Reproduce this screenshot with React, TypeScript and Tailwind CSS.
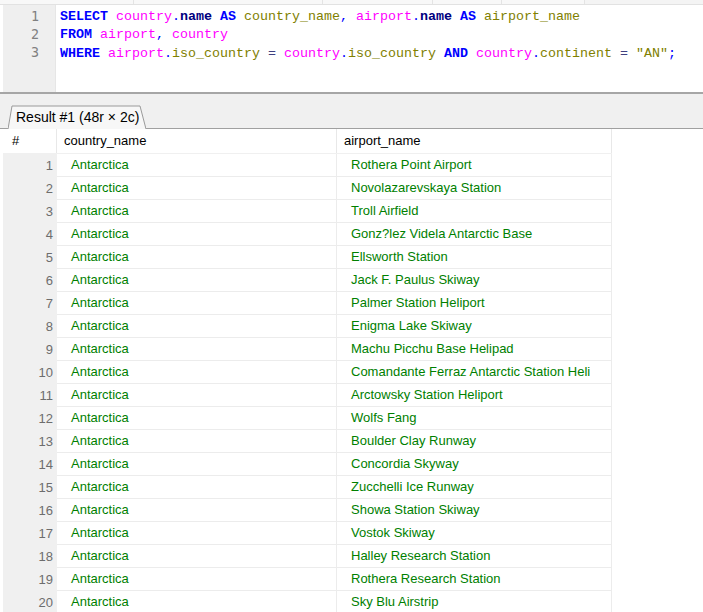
import React from "react";

const rows: string[] = [
  "Rothera Point Airport",
  "Novolazarevskaya Station",
  "Troll Airfield",
  "Gonz?lez Videla Antarctic Base",
  "Ellsworth Station",
  "Jack F. Paulus Skiway",
  "Palmer Station Heliport",
  "Enigma Lake Skiway",
  "Machu Picchu Base Helipad",
  "Comandante Ferraz Antarctic Station Heli",
  "Arctowsky Station Heliport",
  "Wolfs Fang",
  "Boulder Clay Runway",
  "Concordia Skyway",
  "Zucchelli Ice Runway",
  "Showa Station Skiway",
  "Vostok Skiway",
  "Halley Research Station",
  "Rothera Research Station",
  "Sky Blu Airstrip",
];

const K = ({ children }: { children: React.ReactNode }) => (
  <span className="font-bold text-[#0000ff]">{children}</span>
);
const T = ({ children }: { children: React.ReactNode }) => (
  <span className="text-[#ff00ff]">{children}</span>
);
const C = ({ children }: { children: React.ReactNode }) => (
  <span className="text-[#808000]">{children}</span>
);
const P = ({ children }: { children: React.ReactNode }) => (
  <span className="text-[#0000ff]">{children}</span>
);
const N = ({ children }: { children: React.ReactNode }) => (
  <span className="font-bold text-[#000080]">{children}</span>
);

export default function App() {
  return (
    <div
      className="w-[703px] h-[612px] overflow-hidden bg-[#f0f0f0] flex flex-col"
      style={{ fontFamily: '"Liberation Sans", Arial, sans-serif' }}
    >
      {/* top strip */}
      <div className="h-[5px] shrink-0 flex bg-[#f8f8f8] border-b border-[#e2e2e2]">
        <div className="w-[134px] border-r border-[#e4e4e4]" />
        <div className="w-[189px] border-r border-[#e4e4e4]" />
        <div className="w-[110px] border-r border-[#e4e4e4]" />
        <div className="w-[69px] border-r border-[#e4e4e4]" />
        <div className="w-[83px] border-r border-[#e4e4e4]" />
        <div className="flex-1 bg-[#f4f4f4]" />
      </div>

      {/* editor */}
      <div className="h-[89px] shrink-0 flex bg-white border-b-2 border-[#a6a6a6] pl-[3px]">
        <div
          className="w-[52px] bg-[#efefef] flex flex-col items-end pr-[16px] pt-[3px] text-[#808080] text-[13.33px] leading-[18px]"
          style={{ fontFamily: '"DejaVu Sans Mono", "Liberation Mono", monospace' }}
        >
          <div>1</div>
          <div>2</div>
          <div>3</div>
        </div>
        <div className="w-[2px] bg-white border-l border-[#e6e6e6]" />
        <div
          className="pl-[3px] pt-[3px] text-[13.33px] leading-[18px] whitespace-pre text-black"
          style={{ fontFamily: '"Liberation Mono", "DejaVu Sans Mono", monospace' }}
        >
          <div>
            <K>SELECT</K> <T>country</T>
            <P>.</P>
            <N>name</N> <K>AS</K> <C>country_name</C>
            <P>,</P> <T>airport</T>
            <P>.</P>
            <N>name</N> <K>AS</K> <C>airport_name</C>
          </div>
          <div>
            <K>FROM</K> <T>airport</T>
            <P>,</P> <T>country</T>
          </div>
          <div className="mt-[1px]">
            <K>WHERE</K> <T>airport</T>
            <P>.</P>
            <C>iso_country</C> <span className="text-[#404080]">=</span> <T>country</T>
            <P>.</P>
            <C>iso_country</C> <K>AND</K> <T>country</T>
            <P>.</P>
            <C>continent</C> <span className="text-[#404080]">=</span> <C>"AN"</C>
            <P>;</P>
          </div>
        </div>
      </div>

      {/* tab strip */}
      <div className="h-[35px] shrink-0 flex items-end bg-[#f0f0f0]">
        <div className="w-[8px] h-px bg-[#a0a0a0]" />
        <div className="relative w-[138px] h-[24px] flex items-center pl-[8px] text-[14px] text-black">
          <svg
            className="absolute inset-0"
            width="138"
            height="24"
            viewBox="0 0 138 24"
          >
            <path d="M0 24 L4 1 L132 1 L138 24" fill="#f7f7f7" stroke="#9a9a9a" strokeWidth="1" />
          </svg>
          <span className="relative">Result #1 (48r × 2c)</span>
        </div>
        <div className="flex-1 h-px bg-[#a0a0a0]" />
      </div>

      {/* table */}
      <div className="flex-1 shrink-0 bg-white pl-[3px] text-[13px]">
        <div className="flex">
          <div className="w-[609px]">
            {/* header */}
            <div className="flex h-[25px] items-center border-b border-[#f0f0f0] text-black">
              <div className="w-[54px] h-full flex items-center pl-[9px] border-r border-[#e8e8e8]">#</div>
              <div className="w-[280px] h-full flex items-center pl-[7px] border-r border-[#e8e8e8]">
                country_name
              </div>
              <div className="w-[275px] h-full flex items-center pl-[7px] border-r border-[#e8e8e8]">
                airport_name
              </div>
            </div>
            {rows.map((r, i) => (
              <div key={i} className="flex h-[23px]">
                <div className="w-[54px] h-full flex items-center justify-end pr-[4px] bg-[#f0f0f0] text-[#6d6d6d]">
                  {i + 1}
                </div>
                <div className="w-[280px] h-full flex items-center pl-[14px] border-r border-b border-[#ececec] text-[#008000]">
                  Antarctica
                </div>
                <div className="w-[275px] h-full flex items-center pl-[14px] border-r border-b border-[#ececec] text-[#008000]">
                  {r}
                </div>
              </div>
            ))}
          </div>
        </div>
      </div>
    </div>
  );
}
